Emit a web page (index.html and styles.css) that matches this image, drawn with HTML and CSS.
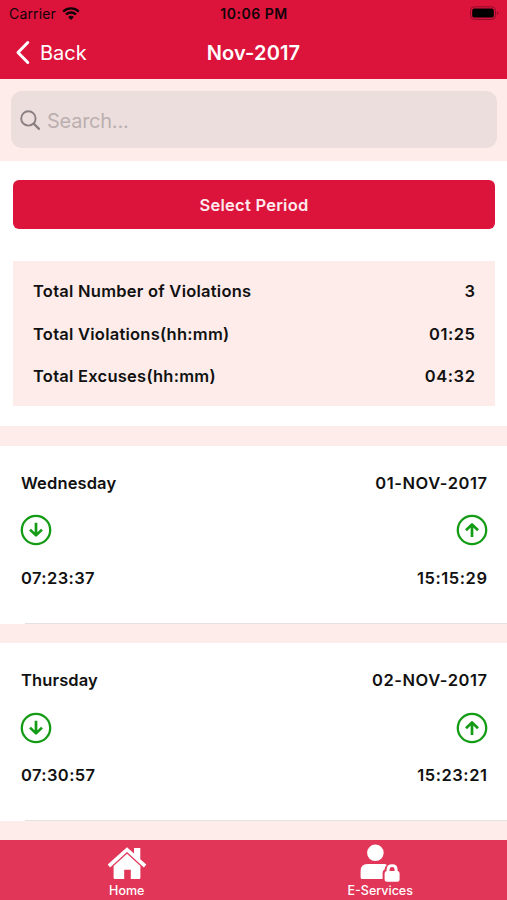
FILE: index.html
```html
<!DOCTYPE html>
<html lang="en">
  <head>
    <meta charset="UTF-8" />
    <meta name="viewport" content="width=device-width, initial-scale=1.0" />
    <title>Nov-2017</title>
    <link rel="stylesheet" href="styles.css">
  </head>
  <body>
    <header class="header">
      <div class="status-bar">
        <div class="carrier">
          <span class="carrier-name">Carrier</span>
          <svg class="wifi" width="18" height="13" viewBox="0 0 18 13">
            <path d="M1.2 4.6a11.2 11.2 0 0 1 15.6 0M4 7.5a7.2 7.2 0 0 1 10 0" fill="none" stroke="#100308" stroke-width="2.3" />
            <path d="M9 13 6.1 10.1a4.1 4.1 0 0 1 5.8 0z" fill="#100308" />
          </svg>
        </div>
        <span class="clock">10:06 PM</span>
        <div class="battery-side">
          <svg width="30" height="15" viewBox="0 0 30 15">
            <rect x="1.5" y="0.8" width="25" height="12.6" rx="3.8" fill="none" stroke="#8f0d2b" />
            <rect x="3.2" y="2.6" width="21.6" height="9" rx="2.2" fill="#000" />
            <path d="M28 5.2v3.8q1.4-.6 1.4-1.9T28 5.2z" fill="#8f0d2b" />
          </svg>
        </div>
      </div>
      <nav class="nav-bar">
        <a href="#" class="back">
          <svg width="16" height="24" viewBox="0 0 16 24">
            <path d="M13.8 1.5 4 11.5l9.8 10" fill="none" stroke="#fff" stroke-width="3" stroke-linecap="round" stroke-linejoin="round" />
          </svg>
          <span class="back-label">Back</span>
        </a>
        <h1 class="title">Nov-2017</h1>
      </nav>
    </header>

    <div class="search">
      <label class="search-box">
        <svg width="21" height="21" viewBox="0 0 21 21">
          <circle cx="8.4" cy="8.4" r="7.2" fill="none" stroke="#8a8083" stroke-width="1.9" />
          <path d="m13.7 13.7 5.3 5.1" stroke="#8a8083" stroke-width="2.3" stroke-linecap="round" />
        </svg>
        <input type="text" class="search-input" placeholder="Search..." />
      </label>
    </div>

    <main>
      <section class="overview">
        <button class="period-btn">Select Period</button>
        <div class="summary">
          <div class="row"><span>Total Number of Violations</span><span class="value">3</span></div>
          <div class="row"><span>Total Violations(hh:mm)</span><span class="value">01:25</span></div>
          <div class="row"><span>Total Excuses(hh:mm)</span><span class="value">04:32</span></div>
        </div>
      </section>

      <section class="day">
        <div class="row"><span class="weekday">Wednesday</span><span class="value">01-NOV-2017</span></div>
        <div class="row icons">
          <svg class="arrow" viewBox="0 0 32 32">
            <circle cx="16" cy="16" r="14.2" />
            <path d="M16 8.8v12.5M10 15.6l6 5.8 6-5.8" />
          </svg>
          <svg class="arrow" viewBox="0 0 32 32">
            <circle cx="16" cy="16" r="14.2" />
            <path d="M16 23V10.5M10 16.2l6-5.8 6 5.8" />
          </svg>
        </div>
        <div class="row"><span class="time-in">07:23:37</span><span class="value">15:15:29</span></div>
      </section>

      <section class="day">
        <div class="row"><span class="weekday">Thursday</span><span class="value">02-NOV-2017</span></div>
        <div class="row icons">
          <svg class="arrow" viewBox="0 0 32 32">
            <circle cx="16" cy="16" r="14.2" />
            <path d="M16 8.8v12.5M10 15.6l6 5.8 6-5.8" />
          </svg>
          <svg class="arrow" viewBox="0 0 32 32">
            <circle cx="16" cy="16" r="14.2" />
            <path d="M16 23V10.5M10 16.2l6-5.8 6 5.8" />
          </svg>
        </div>
        <div class="row"><span class="time-in">07:30:57</span><span class="value">15:23:21</span></div>
      </section>
    </main>

    <footer class="tab-bar">
      <a href="#" class="tab">
        <svg width="40" height="40" viewBox="0 0 40 40" fill="#fff">
          <path d="M20 13.8 33.4 26v11.8q0 1.2-1.2 1.2h-8.4v-9.3h-6.6V39H7.8q-1.2 0-1.2-1.2V26z" />
          <path d="M20 7.2 27 13.5V8h6.3v11.3l6 5.3-2.4 2.9L20 12 3.1 27.5.7 24.6z" />
        </svg>
        <span>Home</span>
      </a>
      <a href="#" class="tab">
        <svg width="40" height="40" viewBox="0 0 40 40" fill="#fff">
          <circle cx="15.4" cy="12.8" r="8.3" />
          <path d="M7.5 24h16.7q1.8 0 2.6 1-2.1 1.7-2.2 4.6-2 1-2 3.4v6H2.2Q.6 39 .6 37.4V31q0-7 6.9-7z" />
          <path d="M26.6 31v-1.5q0-5.3 5.5-5.3t5.5 5.3V31q2 .4 2 2.4v5.9q0 2.5-2.5 2.5h-10q-2.5 0-2.5-2.5v-5.9q0-2 2-2.4zm3 0h5v-1.6q0-2.4-2.5-2.4t-2.5 2.4z" />
        </svg>
        <span>E-Services</span>
      </a>
    </footer>
  </body>
</html>
```

FILE: styles.css
```css
* {
  box-sizing: border-box;
}

body {
  margin: 0;
  height: 900px;
  display: flex;
  flex-direction: column;
  overflow: hidden;
  background: #fdecea;
  font-family: Inter, "Liberation Sans", sans-serif;
  color: #111;
}

a {
  color: #fff;
  text-decoration: none;
}

svg {
  display: block;
  flex: none;
  overflow: visible;
}

.header {
  height: 79px;
  background: #dc143c;
}

.status-bar {
  height: 27px;
  padding: 0 8px 0 9px;
  display: grid;
  grid-template-columns: 1fr auto 1fr;
  align-items: center;
  font-size: 14px;
  color: #100308;
}

.carrier {
  display: flex;
  align-items: center;
  gap: 6px;
}

.carrier-name {
  letter-spacing: 0.15px;
}

.clock {
  font-weight: 600;
  letter-spacing: 0.5px;
}

.battery-side {
  display: flex;
  justify-content: flex-end;
}

.nav-bar {
  height: 52px;
  padding: 0 14px;
  display: grid;
  grid-template-columns: 1fr auto 1fr;
  align-items: center;
}

.back {
  display: flex;
  align-items: center;
  gap: 10px;
  font-size: 20px;
}

.title {
  margin: 0;
  font-size: 20px;
  font-weight: 600;
  letter-spacing: 0.15px;
  color: #fff;
}

.search {
  height: 82px;
  padding: 12px 10px 13px 11px;
}

.search-box {
  height: 57px;
  padding: 2px 9px 0;
  display: flex;
  align-items: center;
  gap: 6px;
  background: #ecdedd;
  border-radius: 11px;
}

.search-input {
  flex: 1;
  padding: 0;
  border: none;
  outline: none;
  background: none;
  font-family: inherit;
  font-size: 20px;
  letter-spacing: -0.25px;
}

.search-input::placeholder {
  color: #bbafaf;
}

.overview {
  height: 265px;
  padding: 19px 12px 0 13px;
  background: #fff;
}

.period-btn {
  display: block;
  width: 100%;
  height: 49px;
  padding: 0;
  border: none;
  border-radius: 6px;
  background: #dc143c;
  color: #ffe9ec;
  font-family: inherit;
  font-size: 16.5px;
  font-weight: 600;
  letter-spacing: 0.25px;
}

.summary {
  height: 145px;
  margin-top: 32px;
  padding: 9px 20px 0;
  background: #fdecea;
}

.summary .row {
  height: 42.6px;
}

.row {
  display: flex;
  justify-content: space-between;
  align-items: center;
  font-size: 16.5px;
  font-weight: 600;
  letter-spacing: 0.25px;
}

.value {
  letter-spacing: 0.55px;
  margin-right: -0.5px;
}

.weekday {
  letter-spacing: 0.12px;
}

.time-in {
  letter-spacing: 0.4px;
}

.day {
  height: 178px;
  margin-top: 19.5px;
  padding: 13.5px 20px 0 21px;
  background: #fff linear-gradient(#e6e0e0, #e6e0e0) 25px 100% / 100% 1px no-repeat;
}

.day .row {
  height: 47.6px;
}

.arrow {
  width: 32px;
  height: 32px;
  fill: none;
  stroke: #159c17;
  stroke-width: 2.3;
  stroke-linejoin: round;
}

.arrow path {
  stroke-width: 2.7;
}

.day .icons {
  margin: 0 -1px;
}

.tab-bar {
  height: 60px;
  margin-top: auto;
  display: flex;
  background: #e13658;
}

.tab {
  flex: 1;
  display: flex;
  flex-direction: column;
  align-items: center;
  gap: 3px;
  font-size: 12.5px;
  line-height: 16px;
  font-weight: 500;
}
```
